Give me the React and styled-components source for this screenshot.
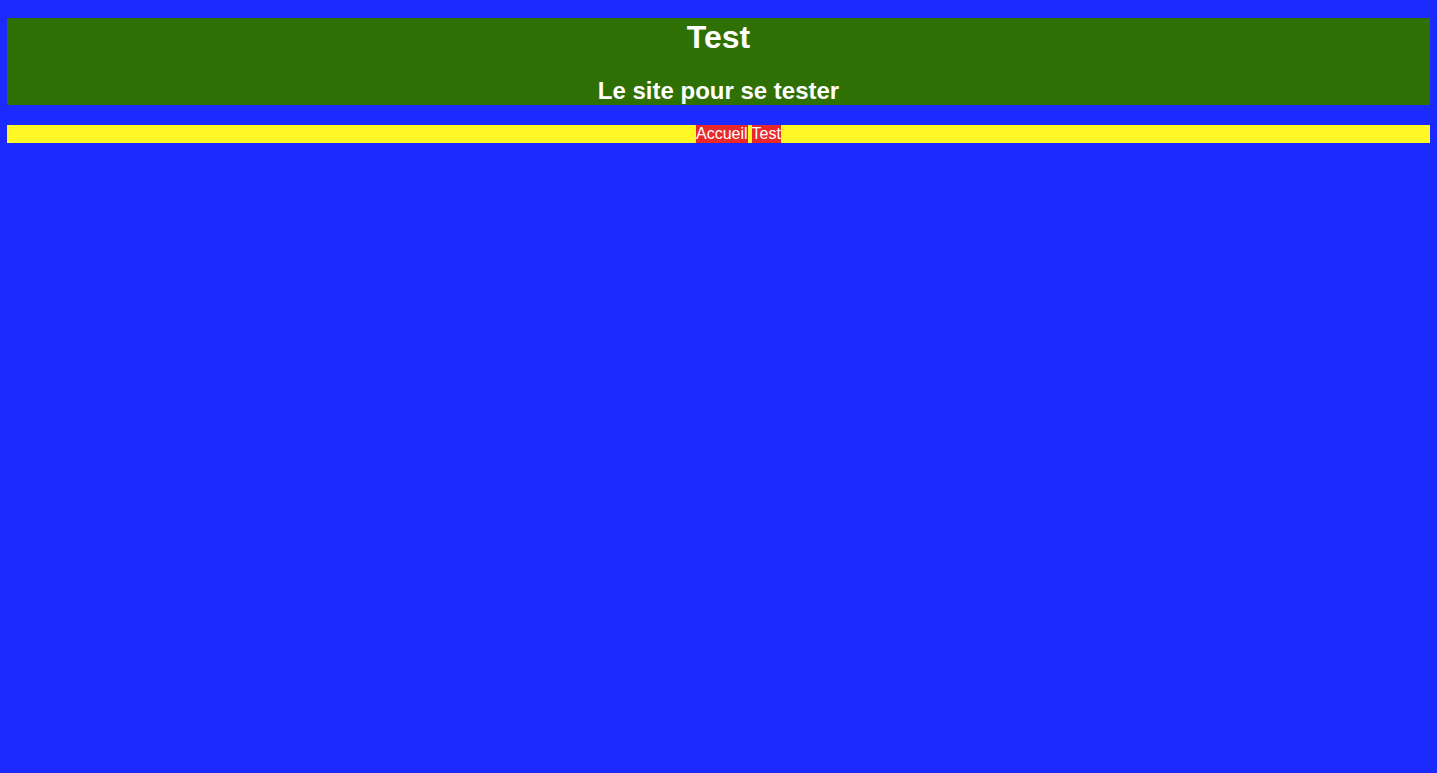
import styled, { createGlobalStyle } from "styled-components";

const GlobalStyle = createGlobalStyle`
    html, body {
        margin: 0;
        padding: 0;
        background-color: #1b2aff;
        min-height: 100%;
    }
    body {
        font-family: "Liberation Sans", Arial, Helvetica, sans-serif;
        color: #fff;
    }
`;

const App = () => {
    return (
        <>
            <GlobalStyle />
            <Page>
                <Header>
                    <Title>Test</Title>
                    <Subtitle>Le site pour se tester</Subtitle>
                </Header>
                <Nav>
                    <NavItem><NavLink href="#">Accueil</NavLink></NavItem>
                    <NavItem><NavLink href="#">Test</NavLink></NavItem>
                </Nav>
            </Page>
        </>
    );
};

const Page = styled.div`
    padding: 18px 7px 0;
    display: flex;
    flex-direction: column;
    gap: 20px;
`;

const Header = styled.header`
    background-color: #2f7005;
    text-align: center;
    height: 87px;
`;

const Title = styled.h1`
    margin: 0;
    font-size: 32px;
    line-height: 38px;
    font-weight: bold;
`;

const Subtitle = styled.h2`
    margin: 20px 0 0;
    font-size: 24px;
    line-height: 29px;
    font-weight: bold;
`;

const Nav = styled.ul`
    background-color: #fff826;
    display: flex;
    justify-content: center;
    gap: 4px;
    height: 18px;
    margin: 0;
    padding: 0 0 0 40px;
    list-style: none;
`;

const NavItem = styled.li`
    display: flex;
`;

const NavLink = styled.a`
    background-color: #e8282a;
    color: #fff;
    text-decoration: none;
    font-size: 16px;
    line-height: 18px;
`;

export default App;
